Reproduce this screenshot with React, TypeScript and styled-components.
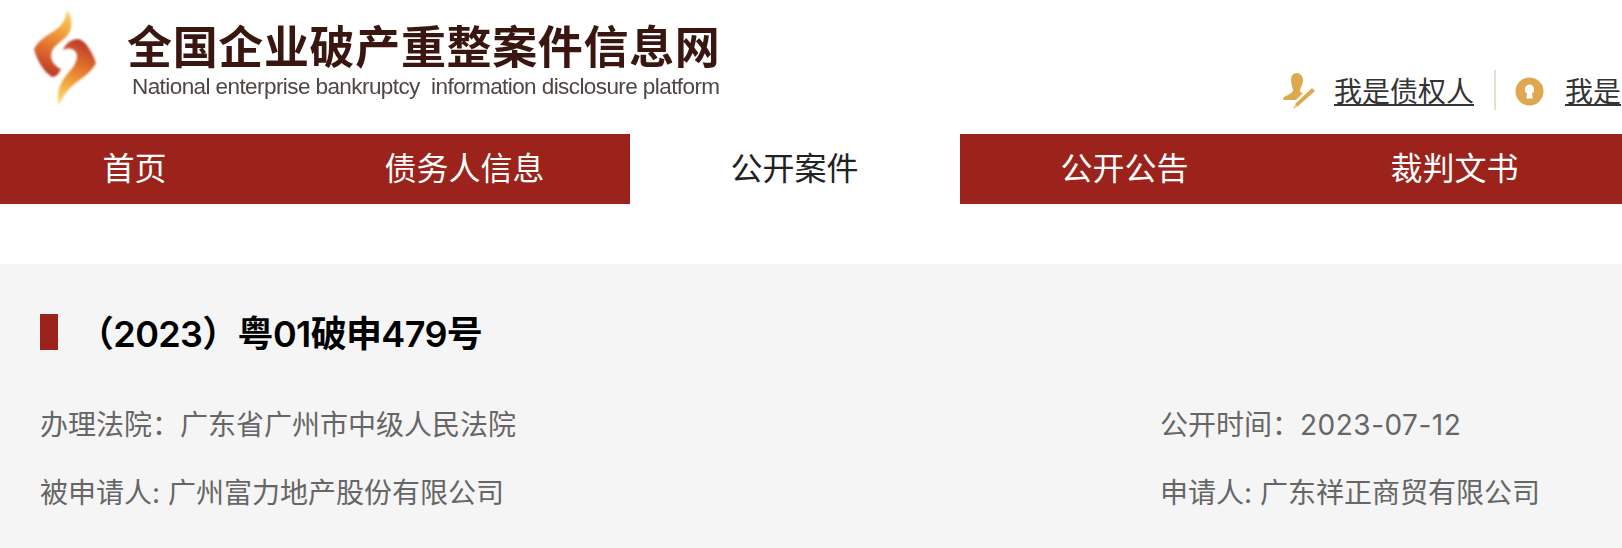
import React from "react";
import styled, { createGlobalStyle } from "styled-components";

const cjk = `"Noto Sans CJK SC", "Noto Sans", sans-serif`;
const mixed = `"Inter", "Noto Sans CJK SC", sans-serif`;

const Global = createGlobalStyle`
  html, body { margin: 0; padding: 0; background: #fff; overflow: hidden; }
  body { font-family: ${cjk}; }
`;

const Page = styled.div`
  width: 1622px;
  height: 548px;
  display: flex;
  flex-direction: column;
  overflow: hidden;
`;

const Header = styled.header`
  height: 134px;
  display: flex;
  justify-content: space-between;
  padding-left: 32px;
  flex: none;
`;

const Brand = styled.div`
  display: flex;
  align-items: flex-start;
  gap: 29px;
  padding-top: 9px;
`;

const BrandText = styled.div`
  display: flex;
  flex-direction: column;
  padding-top: 10px;
  filter: blur(0.55px);
`;

const BrandTitle = styled.div`
  font-family: "Noto Sans CJK SC", sans-serif;
  font-weight: 700;
  font-size: 45px;
  line-height: 52px;
  color: #3a1610;
  white-space: nowrap;
  letter-spacing: 0.65px;
`;

const BrandSub = styled.div`
  font-family: "Liberation Sans", sans-serif;
  font-size: 22.5px;
  line-height: 26px;
  margin-left: 5px;
  margin-top: 3px;
  color: #4c4744;
  white-space: pre;
  letter-spacing: -0.58px;
`;

const UserLinks = styled.div`
  display: flex;
  align-items: center;
  height: 42px;
  margin-top: 69px;
  flex: none;
  width: 339px;
`;

const UserLink = styled.a<{ $gap: number }>`
  display: flex;
  align-items: center;
  gap: ${(p) => p.$gap}px;
  font-size: 28px;
  line-height: 40px;
  color: #333;
  white-space: nowrap;
  svg { margin-top: 2px; }
  span { text-decoration: underline; text-underline-offset: 2px; text-decoration-thickness: 2px; }
`;

const Divider = styled.i`
  display: block;
  width: 2px;
  height: 40px;
  background: #e2e0cf;
  margin: 0 19px 0 20px;
  flex: none;
`;

const Nav = styled.nav`
  flex: none;
  height: 70px;
  display: flex;
  background: #9b231b;
`;

const NavItem = styled.a<{ $active?: boolean; $inset?: number }>`
  flex: none;
  width: 330px;
  margin-left: ${(p) => -(p.$inset ?? 0)}px;
  display: flex;
  align-items: center;
  justify-content: center;
  padding: 0 1px 6px 0;
  box-sizing: border-box;
  font-size: 32px;
  line-height: 64px;
  color: ${(p) => (p.$active ? "#222" : "#fff")};
  background: ${(p) => (p.$active ? "#fff" : "transparent")};
`;

const Spacer = styled.div`
  flex: none;
  height: 60px;
`;

const Detail = styled.main`
  flex: 1;
  background: #f5f5f5;
  padding: 50px 40px 0;
  font-family: ${mixed};
`;

const TitleRow = styled.div`
  display: flex;
  align-items: center;
  height: 36px;
  margin-bottom: 53px;
`;

const Marker = styled.i`
  display: block;
  width: 18px;
  height: 36px;
  background: #9b231b;
  flex: none;
`;

const Title = styled.h1`
  margin: 4px 0 0 20px;
  font-size: 36px;
  font-weight: 600;
  line-height: 44px;
  letter-spacing: -0.65px;
  color: #000;
  white-space: nowrap;
`;

const Rows = styled.div`
  display: grid;
  grid-template-columns: 1120px 1fr;
  row-gap: 28px;
  padding-top: 2px;
`;

const Field = styled.div`
  font-size: 28px;
  line-height: 40px;
  color: #666;
  white-space: nowrap;
`;

const DateValue = styled.span`
  letter-spacing: 0.5px;
`;

const Flame = () => (
  <svg width="66" height="98" viewBox="0 0 66 98">
    <defs>
      <linearGradient id="f1" gradientUnits="userSpaceOnUse" x1="38" y1="2" x2="14" y2="62">
        <stop offset="0" stopColor="#fcd662" />
        <stop offset="0.35" stopColor="#f2a03e" />
        <stop offset="0.7" stopColor="#de6a2d" />
        <stop offset="1" stopColor="#bd3f2a" />
      </linearGradient>
      <linearGradient id="f2" gradientUnits="userSpaceOnUse" x1="52" y1="34" x2="28" y2="94">
        <stop offset="0" stopColor="#bd3f2a" />
        <stop offset="0.35" stopColor="#e0702e" />
        <stop offset="0.7" stopColor="#f5ab42" />
        <stop offset="1" stopColor="#fddc70" />
      </linearGradient>
    </defs>
    <g style={{ filter: "blur(1px)" }}>
      <path d="M35 1C40 8 41 17 37 24C33 31 24 34 20 42C17 50 22 57 29 60C27 65 24 68 20 68C12 63 5 52 2 40C6 32 14 27 22 22C30 17 34 10 35 1Z" fill="url(#f1)" />
      <path d="M27 96C24 86 27 76 33 68C38 61 45 56 45 47C45 41 38 37 31 41C33 35 39 30 46 30C53 31 60 42 64 54C60 62 52 68 45 73C37 79 31 86 27 96Z" fill="url(#f2)" />
    </g>
  </svg>
);

const WriterIcon = () => (
  <svg width="33" height="36" viewBox="0 0 33 36" fill="#dda94f">
    <path d="M8 7C8 3 10 0 14 0C17 0 20 3 20 7C20 11 18 14 17 17C17 19 18 20 20 20L13 27H1C0 26 0 25 1 24C4 22 8 21 10 18C10 15 8 11 8 7Z" />
    <path d="M29 15L32 18L14 34L12 31Z" />
    <path d="M12 32L13 34L10 36Z" />
  </svg>
);

const KeyIcon = () => (
  <svg width="29" height="29" viewBox="0 0 29 29">
    <circle cx="14.5" cy="14.5" r="14" fill="#dfa84f" />
    <path d="M14.5 7.5A5 5 0 0 1 17 16.6L17.6 21.5H11.4L12 16.6A5 5 0 0 1 14.5 7.5Z" fill="#fff" />
  </svg>
);

export default function App() {
  return (
    <Page>
      <Global />
      <Header>
        <Brand>
          <Flame />
          <BrandText>
            <BrandTitle>全国企业破产重整案件信息网</BrandTitle>
            <BrandSub>National enterprise bankruptcy  information disclosure platform</BrandSub>
          </BrandText>
        </Brand>
        <UserLinks>
          <UserLink $gap={18}><WriterIcon /><span>我是债权人</span></UserLink>
          <Divider />
          <UserLink $gap={21}><KeyIcon /><span>我是</span></UserLink>
        </UserLinks>
      </Header>
      <Nav>
        <NavItem $inset={30}>首页</NavItem>
        <NavItem>债务人信息</NavItem>
        <NavItem $active>公开案件</NavItem>
        <NavItem>公开公告</NavItem>
        <NavItem>裁判文书</NavItem>
      </Nav>
      <Spacer />
      <Detail>
        <TitleRow>
          <Marker />
          <Title>（2023）粤01破申479号</Title>
        </TitleRow>
        <Rows>
          <Field>办理法院：广东省广州市中级人民法院</Field>
          <Field>公开时间：<DateValue>2023-07-12</DateValue></Field>
          <Field>被申请人: 广州富力地产股份有限公司</Field>
          <Field>申请人: 广东祥正商贸有限公司</Field>
        </Rows>
      </Detail>
    </Page>
  );
}
